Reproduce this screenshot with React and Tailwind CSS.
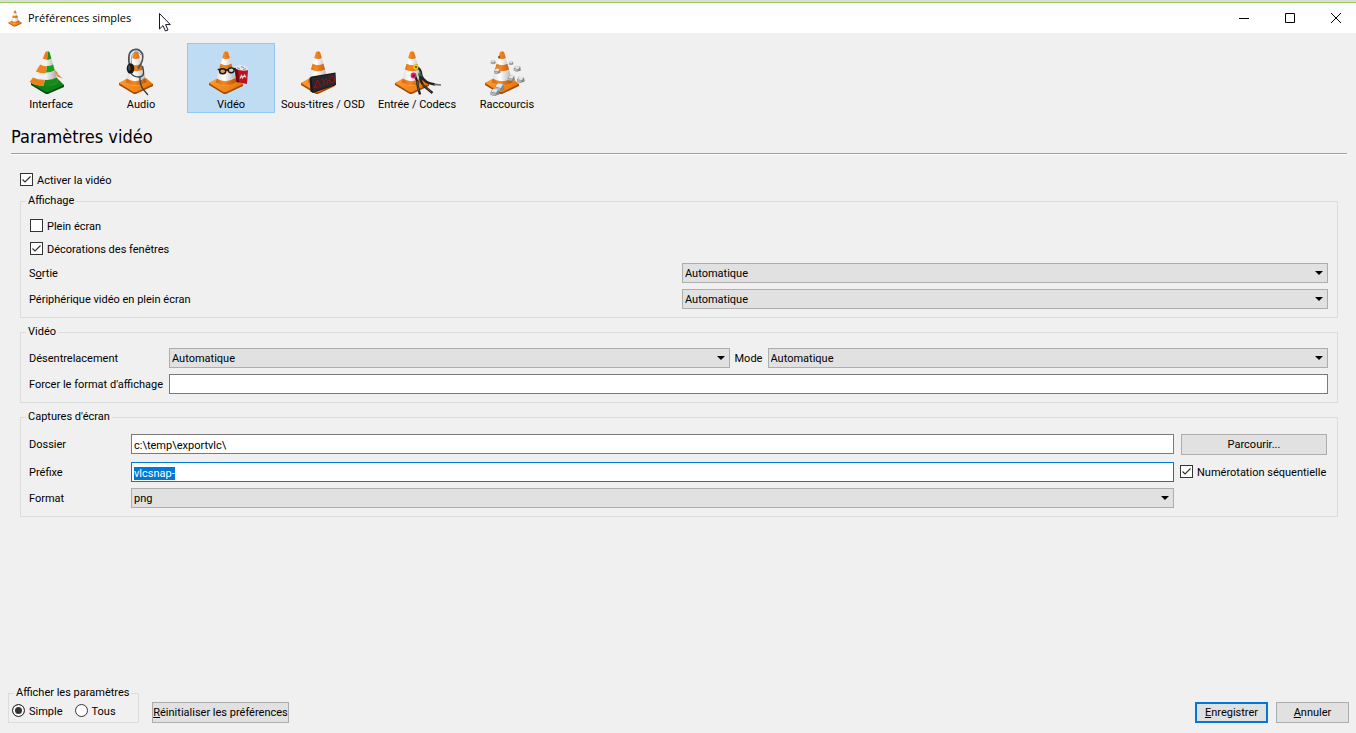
import { useEffect, useId, useRef, useState } from "react";

function ConeDefs({ id }) {
  return (
    <defs>
      <linearGradient id={`${id}-o`} x1="9" x2="29" gradientUnits="userSpaceOnUse">
        <stop offset="0" stopColor="#d96a08" />
        <stop offset="0.4" stopColor="#f7871f" />
        <stop offset="1" stopColor="#bf5400" />
      </linearGradient>
      <linearGradient id={`${id}-w`} x1="9" x2="29" gradientUnits="userSpaceOnUse">
        <stop offset="0" stopColor="#dcdcdc" />
        <stop offset="0.4" stopColor="#ffffff" />
        <stop offset="1" stopColor="#b0b0b0" />
      </linearGradient>
      <linearGradient id={`${id}-b`} x1="2" y1="32" x2="34" y2="46" gradientUnits="userSpaceOnUse">
        <stop offset="0" stopColor="#ff9a30" />
        <stop offset="1" stopColor="#e57508" />
      </linearGradient>
    </defs>
  );
}

function Cone({ id }) {
  return (
    <g>
      <ConeDefs id={id} />
      <path d="M2 38 L16 46.500 Q18 47.500 20 46.500 L36 39 L36 37 L18 30 L2 36 Z" fill="#a34a00" />
      <path d="M2 36 L9 32 L29 31 L36 37 L20 44.800 Q18 45.600 16 44.800 Z" fill={`url(#${id}-b)`} />
      <path d="M17 5 Q19 3.500 21 5 L29.500 35 Q19.500 42 8.500 35.500 Z" fill={`url(#${id}-w)`} />
      <path d="M17 5 Q19 3.500 21 5 L22.800 11 Q19 13 15.200 11 Z" fill={`url(#${id}-o)`} />
      <path d="M13.500 16.800 Q19 19.500 24.400 16.800 L26 22.600 Q19 26 11.900 22.600 Z" fill={`url(#${id}-o)`} />
      <path d="M9.600 31.500 Q19 37 28.500 31 L29.600 35 Q19.500 42 8.500 35.500 Z" fill={`url(#${id}-o)`} />
    </g>
  );
}

function InterfaceIcon({ id }) {
  return (
    <g>
      <ConeDefs id={id} />
      <path d="M4 38 L18 46.500 Q20 47.500 22 46.500 L37 40 L37 38 L20 30 L4 36 Z" fill="#064d06" />
      <path d="M4 36 L11 32 L30 31 L37 38 L22 44.800 Q20 45.600 18 44.800 Z" fill="#12801a" />
      <path d="M24 14 Q28 24 35.500 31.500 L27 27 Z" fill="#f4f4f4" stroke="#d0d0d0" strokeWidth="0.400" />
      <path d="M25.500 19.500 Q27 23 31 26 L29 28.500 L25 25 Z" fill="#ee8a35" />
      <path d="M30.500 27 L35.500 31.500 L29.500 29 Z" fill="#e07420" />
      <path d="M18.500 5 Q20.500 3.500 22.500 5 L31 35 Q26 40 15 38 Z" fill={`url(#${id}-w)`} />
      <path d="M20 4.200 Q21.500 4 22.500 5 L24.300 11.500 Q22 13 19.500 12.800 Z" fill="#1c8e1c" />
      <path d="M19 19 Q23 19.500 26 17.500 L27.600 23.300 Q23 26 18 25.500 Z" fill="#1ba01b" />
      <path d="M15 32.500 Q24 34 29.800 30.500 L31 35 Q26 40 14 39 Z" fill="#168c16" />
      <path d="M18.500 5 L20.600 4.100 L20 14 Q19.500 28 16.500 38.500 Q9 39 2.500 35 Q12 23 18.500 5 Z" fill="#f2f2f2" />
      <path d="M18.500 5 L20.600 4.100 L20.200 12.800 L15.700 11.800 Z" fill="#ec7f1c" />
      <path d="M13.200 17.500 Q16 19.500 19.800 19.300 L18.700 26.500 Q13 26.500 8.800 24.500 Z" fill="#f08420" />
      <path d="M6 30.500 Q11 33 17.800 32.800 L16.500 38.500 Q9 39 2.500 35 Z" fill="#ec7f1c" />
    </g>
  );
}

function AudioIcon({ id }) {
  return (
    <g>
      <Cone id={id} />
      <path d="M13 20 Q9.500 6 16 3 Q22 0.500 25.500 7 Q27 14 21 21.500" fill="none" stroke="#4a5054" strokeWidth="1.700" />
      <path d="M14.500 17 Q13.500 7 18 5 Q22 4 24 8" fill="none" stroke="#8b9195" strokeWidth="0.800" />
      <ellipse cx="13.500" cy="21.500" rx="3.800" ry="5.200" fill="#15181a" />
      <ellipse cx="12.300" cy="21" rx="1.300" ry="3" fill="#42484c" />
      <path d="M14 26 Q16 30 22 30 Q27.500 29.500 26.500 24 L25.500 19 M23 30 Q22.500 37 26 42 L31 48" fill="none" stroke="#3a4043" strokeWidth="1.300" />
    </g>
  );
}

function VideoIcon({ id }) {
  return (
    <g>
      <Cone id={id} />
      <path d="M27.500 21 L41 23 L40 37 L29.500 35 Z" fill="#b81422" />
      <path d="M27.500 21 L31 21.500 L32 35.500 L29.500 35 Z" fill="#6d0710" />
      <path d="M33 31.500 L34.500 28.500 L35.500 31 L37.500 28 L39 30.500" fill="none" stroke="#f3dcdc" strokeWidth="1.200" />
      <path d="M27 21 Q28 18 31 19 Q33 16.500 36 18.500 Q40 18 41.500 23 Q34 25 27 21 Z" fill="#dfe5e9" />
      <path d="M30 20.500 L33 22 M34 19.500 L37 21 M36 23 L39 21.500" stroke="#8194a3" strokeWidth="1" />
      <ellipse cx="15.700" cy="24.300" rx="3.100" ry="2.500" fill="#d9a060" stroke="#161616" strokeWidth="1.400" />
      <ellipse cx="24.200" cy="23.300" rx="3" ry="2.400" fill="#d8d0c4" stroke="#161616" strokeWidth="1.400" />
      <path d="M18.800 23.500 Q20 22.300 21.300 22.900 M12.800 23.300 L10.800 22 M27 22.300 L28.500 21" fill="none" stroke="#161616" strokeWidth="1.400" />
    </g>
  );
}

function SubtitleIcon({ id }) {
  return (
    <g>
      <Cone id={id} />
      <path d="M10.500 31 L12.500 29.500 L36.500 25.500 L37 38 L14 46 L11.500 44.500 Z" fill="#191919" />
      <path d="M12.500 31 L36 26.500 L36.500 37.500 L14 44.500 Z" fill="#2c2628" />
      <path d="M15.500 40.500 L18.500 33.500 L21.500 39 Z M23 32.500 L26 35 L24 38.500 M26.500 31.500 L29.500 34 L27.500 37.500" fill="none" stroke="#a31420" strokeWidth="1.100" strokeDasharray="1.500 0.700" />
      <ellipse cx="33" cy="32.500" rx="2.400" ry="3.200" fill="none" stroke="#a31420" strokeWidth="1.100" strokeDasharray="1.500 0.700" />
    </g>
  );
}

function CodecIcon({ id }) {
  return (
    <g>
      <Cone id={id} />
      <path d="M24 20 Q28 22 28.500 29 Q31 36 42 37.500 M27 27 Q27 35 31 39 L39.500 46 M22 29 Q25 34 25 40 L27 47.500" fill="none" stroke="#232323" strokeWidth="2.400" strokeLinejoin="round" />
      <path d="M41 37.400 L48 38" stroke="#6c6c6c" strokeWidth="1.600" />
      <path d="M25.500 22 Q28 25 28.500 30 M29 37 L38 44.500 M24 34 L26 44" fill="none" stroke="#686868" strokeWidth="0.700" />
      <circle cx="22.800" cy="20" r="2.700" fill="#f0d000" />
      <circle cx="23" cy="20" r="1.100" fill="#4f4700" />
      <circle cx="20.500" cy="28.500" r="2.900" fill="#e91e72" />
      <circle cx="20.700" cy="28.700" r="1.200" fill="#66113a" />
      <path d="M25.500 25.500 L28 27 L27 29.500 L25 28.500 Z" fill="#168a28" />
    </g>
  );
}

const KEYS = [
  [10, 15, 0.9], [28, 16, 0.8], [14, 24, 1.2], [34, 21.500, 1.3],
  [28, 31, 1.3], [37.500, 32.500, 1.4], [16, 40, 1.8], [11.500, 45, 1.6],
];

function ShortcutIcon({ id }) {
  return (
    <g>
      <Cone id={id} />
      <path d="M15 9.500 L17 9 L17.500 11 L15.500 11.500 Z" fill="#555" />
      {KEYS.map(([x, y, s]) => (
        <g key={`${x}-${y}`} transform={`translate(${x} ${y}) scale(${s})`}>
          <path d="M-2.500 0 L-1 -2 L2.500 -1.500 L3 1.500 L0 2.500 L-2.500 1.800 Z" fill="#85888a" />
          <path d="M-2 -0.200 L-0.800 -2 L2.300 -1.600 L1 0.500 Z" fill="#e3e5e6" />
          <path d="M-2.400 0.200 L0.800 0.800 L0.300 2.200 L-2.400 1.600 Z" fill="#b5b8ba" />
        </g>
      ))}
    </g>
  );
}

const TABS = [
  { label: "Interface", Icon: InterfaceIcon, width: "w-[88px]" },
  { label: "Audio", Icon: AudioIcon, width: "w-[88px]" },
  { label: "Vidéo", Icon: VideoIcon, width: "w-[88px]" },
  { label: "Sous-titres / OSD", Icon: SubtitleIcon, width: "w-[92px]" },
  { label: "Entrée / Codecs", Icon: CodecIcon, width: "w-[92px]" },
  { label: "Raccourcis", Icon: ShortcutIcon, width: "w-[84px]" },
];

function Toolbar() {
  const [active, setActive] = useState("Vidéo");
  return (
    <nav className="flex gap-0.5 px-[7px] pt-[10px]">
      {TABS.map(({ label, Icon, width }, i) => (
        <button
          key={label}
          type="button"
          aria-pressed={active === label}
          onClick={() => setActive(label)}
          className={`flex h-[70px] ${width} flex-col items-center border pt-[3px] whitespace-nowrap ${
            active === label ? "border-[#90c8f6] bg-[#c0dcf3]" : "border-transparent"
          }`}
        >
          <svg viewBox="0 0 48 48" className="h-12 w-12 shrink-0 overflow-visible" aria-hidden="true">
            <Icon id={`tab${i}`} />
          </svg>
          <span className="mt-0.5 leading-4">{label}</span>
        </button>
      ))}
    </nav>
  );
}

function CheckBox({ label, checked }) {
  return (
    <label className="flex h-4 w-fit items-start gap-1 leading-[18px] whitespace-nowrap">
      <span className="relative mt-px flex">
        <input
          type="checkbox"
          defaultChecked={checked}
          className="peer h-[13px] w-[13px] appearance-none border border-[#333] bg-white"
        />
        <svg
          viewBox="0 0 13 13"
          className="pointer-events-none absolute inset-0 hidden h-[13px] w-[13px] peer-checked:block"
          aria-hidden="true"
        >
          <path d="M2.500 6.500 L5 9 L10.500 3.500" fill="none" stroke="#333" strokeWidth="1.200" />
        </svg>
      </span>
      {label}
    </label>
  );
}

function Radio({ label, checked }) {
  return (
    <label className="flex h-4 items-start gap-1 leading-[18px]">
      <input
        type="radio"
        name="view"
        defaultChecked={checked}
        className="mt-px h-[13px] w-[13px] appearance-none rounded-full border border-[#333] bg-white checked:bg-[#333] checked:shadow-[inset_0_0_0_2px_white]"
      />
      {label}
    </label>
  );
}

function FieldLabel({ htmlFor, children }) {
  return (
    <label htmlFor={htmlFor} className="h-5 leading-[22px] whitespace-nowrap">
      {children}
    </label>
  );
}

function Select({ id, value }) {
  return (
    <span className="relative flex min-w-0">
      <select
        id={id}
        className="h-5 w-full appearance-none border border-[#adadad] bg-[#e1e1e1] pt-0.5 pr-5 pl-0.5 leading-4"
      >
        <option>{value}</option>
      </select>
      <svg
        viewBox="0 0 8 4"
        className="pointer-events-none absolute top-2 right-[5px] h-1 w-2"
        aria-hidden="true"
      >
        <path d="M0 0 H8 L4 4 Z" fill="#000" />
      </svg>
    </span>
  );
}

function Group({ title, className = "", children }) {
  return (
    <fieldset className={`min-w-0 border border-[#dcdcdc] ${className}`}>
      <legend className="ml-[5px] px-0.5 leading-4">{title}</legend>
      {children}
    </fieldset>
  );
}

function TitleBar() {
  return (
    <header className="flex h-[30px] items-center bg-white pl-2">
      <svg viewBox="1 3 36 45" className="h-[17px] w-3.5" preserveAspectRatio="none" aria-hidden="true">
        <Cone id="title" />
      </svg>
      <h1 className="ml-[6px] font-['Open_Sans','Noto_Sans',sans-serif] text-[11px] leading-4">
        Préférences simples
      </h1>
      <div className="ml-auto flex gap-1.5">
        {[
          ["Réduire", "M0 5.500 H10"],
          ["Agrandir", "M0.500 0.500 H9.500 V9.500 H0.500 Z"],
          ["Fermer", "M0 0 L10 10 M10 0 L0 10"],
        ].map(([name, d]) => (
          <button key={name} type="button" aria-label={name} className="flex h-7 w-10 items-center justify-center">
            <svg viewBox="0 0 10 10" className="h-2.5 w-2.5" aria-hidden="true">
              <path d={d} fill="none" stroke="#000" strokeWidth="1" />
            </svg>
          </button>
        ))}
      </div>
    </header>
  );
}

const button = "border border-[#adadad] bg-[#e1e1e1] h-[21px] pt-px leading-4 whitespace-nowrap";
const textBox = "h-5 w-full border bg-white px-0.5 pt-0.5";

export default function App() {
  const uid = useId();
  const prefix = useRef(null);
  useEffect(() => {
    prefix.current.focus();
    prefix.current.select();
  }, []);

  return (
    <div className="flex min-h-screen flex-col bg-[#f0f0f0] font-[Roboto,'Liberation_Sans',sans-serif] text-[11px] text-black">
      <div className="h-[3px] border-b border-[#99cc55] bg-[#dcdcdc]" />
      <TitleBar />
      <svg viewBox="0 0 12 19" className="pointer-events-none absolute top-[13px] left-[159px] h-[19px] w-3" aria-hidden="true">
        <path d="M0.500 0.500 V16 L4 12.600 L6.400 18 L9 17 L6.600 11.600 H11.300 Z" fill="#fff" stroke="#15152a" strokeWidth="1" />
      </svg>

      <Toolbar />

      <h2 className="mt-3 mr-[9px] ml-[11px] border-b border-[#a0a0a0] pb-1 font-['DejaVu_Sans_Condensed','DejaVu_Sans',sans-serif] text-[18px] leading-6 shadow-[0_1px_0_white]">
        Paramètres vidéo
      </h2>

      <main className="flex flex-col pt-[18px] pr-[18px] pl-5">
        <CheckBox label="Activer la vidéo" checked />

        <Group title="Affichage" className="mt-[5px] pb-2">
          <div className="flex flex-col gap-[7px] px-[9px] pt-[9px]">
            <CheckBox label="Plein écran" />
            <CheckBox label="Décorations des fenêtres" checked />
          </div>
          <div className="mt-1.5 grid grid-cols-[653px_1fr] gap-y-1.5 pr-[9px] pl-2">
            <FieldLabel htmlFor={`${uid}-out`}>
              S<u>o</u>rtie
            </FieldLabel>
            <Select id={`${uid}-out`} value="Automatique" />
            <FieldLabel htmlFor={`${uid}-dev`}>Périphérique vidéo en plein écran</FieldLabel>
            <Select id={`${uid}-dev`} value="Automatique" />
          </div>
        </Group>

        <Group title="Vidéo" className="mt-[6px] pb-2">
          <div className="mt-2 grid grid-cols-[135px_1fr_28px_1fr] gap-x-[5px] gap-y-1.5 pr-[9px] pl-2">
            <FieldLabel htmlFor={`${uid}-deint`}>Désentrelacement</FieldLabel>
            <Select id={`${uid}-deint`} value="Automatique" />
            <FieldLabel htmlFor={`${uid}-mode`}>Mode</FieldLabel>
            <Select id={`${uid}-mode`} value="Automatique" />
            <FieldLabel htmlFor={`${uid}-aspect`}>Forcer le format d'affichage</FieldLabel>
            <input id={`${uid}-aspect`} className={`${textBox} col-span-3 border-[#7a7a7a]`} />
          </div>
        </Group>

        <Group title="Captures d'écran" className="mt-[6px] pb-2">
          <div className="mt-[9px] grid grid-cols-[96px_1fr_148px] gap-x-1.5 pr-[9px] pl-2">
            <FieldLabel htmlFor={`${uid}-dir`}>Dossier</FieldLabel>
            <input
              id={`${uid}-dir`}
              defaultValue={"c:\\temp\\exportvlc\\"}
              className={`${textBox} border-[#7a7a7a]`}
            />
            <button type="button" className={`${button} mx-px`}>
              Parcourir...
            </button>
          </div>
          <div className="mt-[7px] grid grid-cols-[96px_1fr_148px] gap-x-1.5 gap-y-1.5 pr-[9px] pl-2">
            <FieldLabel htmlFor={`${uid}-prefix`}>Préfixe</FieldLabel>
            <input
              id={`${uid}-prefix`}
              ref={prefix}
              defaultValue="vlcsnap-"
              className={`${textBox} border-[#0078d7] outline-none selection:bg-[#0078d7] selection:text-white`}
            />
            <span className="flex items-center">
              <CheckBox label="Numérotation séquentielle" checked />
            </span>
            <FieldLabel htmlFor={`${uid}-format`}>Format</FieldLabel>
            <Select id={`${uid}-format`} value="png" />
          </div>
        </Group>
      </main>

      <footer className="mt-auto flex items-end gap-2 pr-[7px] pb-[10px] pl-2">
        <Group title="Afficher les paramètres" className="w-[131px] pb-[3px] whitespace-nowrap">
          <div className="flex gap-3 pt-0.5 pl-[3px]">
            <Radio label="Simple" checked />
            <Radio label="Tous" />
          </div>
        </Group>
        <button type="button" className={`${button} ml-[5px] w-[137px]`}>
          <u>R</u>éinitialiser les préférences
        </button>
        <button type="submit" className="ml-auto h-[21px] w-[73px] border-2 border-[#0078d7] bg-[#e1e1e1] pt-px leading-4">
          <u>E</u>nregistrer
        </button>
        <button type="button" className={`${button} w-[73px]`}>
          <u>A</u>nnuler
        </button>
      </footer>
    </div>
  );
}
